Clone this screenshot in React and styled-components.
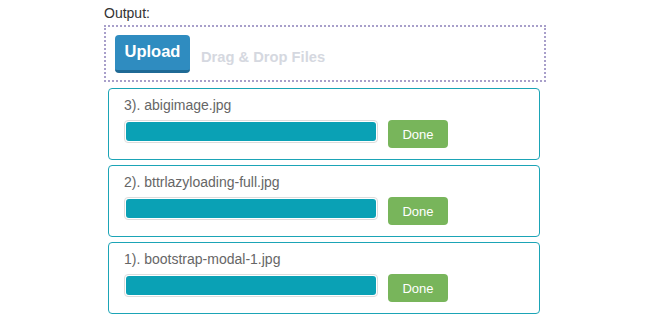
import React from 'react';
import styled, { createGlobalStyle } from 'styled-components';

const Global = createGlobalStyle`
  body {
    margin: 0;
    background: #fff;
    font-family: 'Liberation Sans', Arial, sans-serif;
  }
`;

const Page = styled.div`
  padding: 3px 0 0 104px;
  width: 442px;
`;

const Label = styled.div`
  font-size: 14px;
  line-height: 20px;
  color: #333;
`;

const DropZone = styled.div`
  margin-top: 2px;
  border: 2px dotted #a89fca;
  display: flex;
  align-items: flex-start;
  padding: 8px 0 0 9px;
  box-sizing: content-box;
  height: 45px;
`;

const UploadButton = styled.button`
  width: 75px;
  height: 38px;
  background: #2f8cc0;
  border: 0;
  border-bottom: 3px solid #1f6a95;
  border-radius: 4px;
  color: #fff;
  font-family: 'Liberation Sans', Arial, sans-serif;
  font-weight: bold;
  font-size: 16.5px;
  padding: 0 0 2px;
  cursor: pointer;
`;

const DropHint = styled.span`
  margin: 14px 0 0 11px;
  font-size: 14.7px;
  font-weight: bold;
  color: #d5d8e0;
`;

const List = styled.div`
  margin-top: 6px;
  padding-left: 4px;
  display: flex;
  flex-direction: column;
  gap: 5px;
`;

const Card = styled.div`
  width: 432px;
  height: 72px;
  box-sizing: border-box;
  border: 1px solid #1ba4b6;
  border-radius: 4px;
  padding: 8px 0 0 15px;
`;

const FileName = styled.div`
  font-size: 14px;
  line-height: 16px;
  color: #666;
`;

const Row = styled.div`
  margin-top: 7px;
  display: flex;
  align-items: flex-start;
  gap: 10px;
`;

const Track = styled.div`
  width: 254px;
  height: 23px;
  box-sizing: border-box;
  border: 1px solid #dcdcdc;
  border-radius: 4px;
  padding: 1px;
  background: #fff;
`;

const Fill = styled.div`
  height: 100%;
  background: #0aa1b5;
  border-radius: 3px;
`;

const DoneButton = styled.button`
  width: 60px;
  height: 28px;
  border: 0;
  border-radius: 4px;
  background: #78b55b;
  color: #fff;
  font-family: 'Liberation Sans', Arial, sans-serif;
  font-size: 13px;
  padding: 0;
`;

const files = ['3). abigimage.jpg', '2). bttrlazyloading-full.jpg', '1). bootstrap-modal-1.jpg'];

export default function App() {
  return (
    <Page>
      <Global />
      <Label>Output:</Label>
      <DropZone>
        <UploadButton>Upload</UploadButton>
        <DropHint>Drag &amp; Drop Files</DropHint>
      </DropZone>
      <List>
        {files.map((name) => (
          <Card key={name}>
            <FileName>{name}</FileName>
            <Row>
              <Track>
                <Fill style={{ width: '100%' }} />
              </Track>
              <DoneButton>Done</DoneButton>
            </Row>
          </Card>
        ))}
      </List>
    </Page>
  );
}
